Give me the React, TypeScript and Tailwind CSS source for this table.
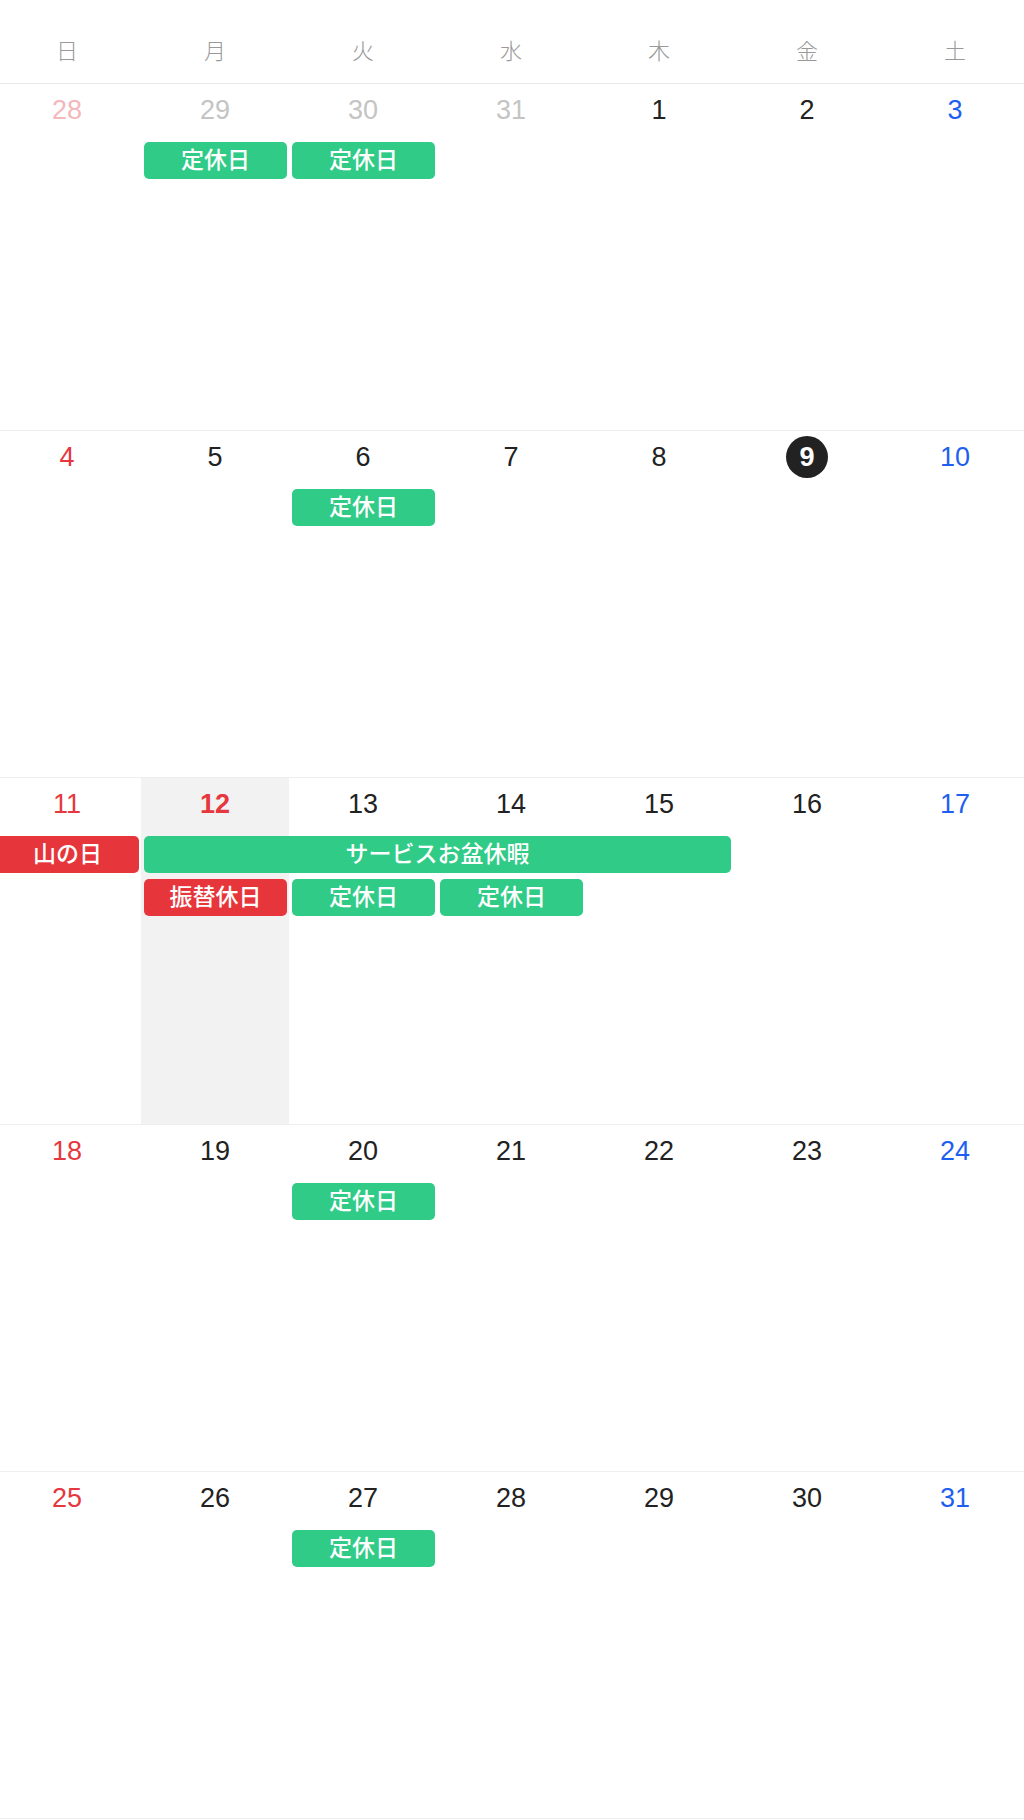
import React from 'react';

type Tone = 'green' | 'red';
type CalEvent = { label: string; start: number; span: number; lane: number; tone: Tone };
type Day = { n: number; kind: 'prev' | 'prevSun' | 'sun' | 'sat' | 'day' | 'today' | 'holiday' };

const weekdays = ['日', '月', '火', '水', '木', '金', '土'];

const weeks: { days: Day[]; events: CalEvent[]; shade?: number }[] = [
  {
    days: [
      { n: 28, kind: 'prevSun' },
      { n: 29, kind: 'prev' },
      { n: 30, kind: 'prev' },
      { n: 31, kind: 'prev' },
      { n: 1, kind: 'day' },
      { n: 2, kind: 'day' },
      { n: 3, kind: 'sat' },
    ],
    events: [
      { label: '定休日', start: 2, span: 1, lane: 1, tone: 'green' },
      { label: '定休日', start: 3, span: 1, lane: 1, tone: 'green' },
    ],
  },
  {
    days: [
      { n: 4, kind: 'sun' },
      { n: 5, kind: 'day' },
      { n: 6, kind: 'day' },
      { n: 7, kind: 'day' },
      { n: 8, kind: 'day' },
      { n: 9, kind: 'today' },
      { n: 10, kind: 'sat' },
    ],
    events: [{ label: '定休日', start: 3, span: 1, lane: 1, tone: 'green' }],
  },
  {
    shade: 2,
    days: [
      { n: 11, kind: 'sun' },
      { n: 12, kind: 'holiday' },
      { n: 13, kind: 'day' },
      { n: 14, kind: 'day' },
      { n: 15, kind: 'day' },
      { n: 16, kind: 'day' },
      { n: 17, kind: 'sat' },
    ],
    events: [
      { label: '山の日', start: 1, span: 1, lane: 1, tone: 'red' },
      { label: 'サービスお盆休暇', start: 2, span: 4, lane: 1, tone: 'green' },
      { label: '振替休日', start: 2, span: 1, lane: 2, tone: 'red' },
      { label: '定休日', start: 3, span: 1, lane: 2, tone: 'green' },
      { label: '定休日', start: 4, span: 1, lane: 2, tone: 'green' },
    ],
  },
  {
    days: [
      { n: 18, kind: 'sun' },
      { n: 19, kind: 'day' },
      { n: 20, kind: 'day' },
      { n: 21, kind: 'day' },
      { n: 22, kind: 'day' },
      { n: 23, kind: 'day' },
      { n: 24, kind: 'sat' },
    ],
    events: [{ label: '定休日', start: 3, span: 1, lane: 1, tone: 'green' }],
  },
  {
    days: [
      { n: 25, kind: 'sun' },
      { n: 26, kind: 'day' },
      { n: 27, kind: 'day' },
      { n: 28, kind: 'day' },
      { n: 29, kind: 'day' },
      { n: 30, kind: 'day' },
      { n: 31, kind: 'sat' },
    ],
    events: [{ label: '定休日', start: 3, span: 1, lane: 1, tone: 'green' }],
  },
];

const colStart: Record<number, string> = {
  1: 'col-start-1',
  2: 'col-start-2',
  3: 'col-start-3',
  4: 'col-start-4',
  5: 'col-start-5',
  6: 'col-start-6',
  7: 'col-start-7',
};
const colSpan: Record<number, string> = {
  1: 'col-span-1',
  2: 'col-span-2',
  3: 'col-span-3',
  4: 'col-span-4',
  5: 'col-span-5',
};
const laneRow: Record<number, string> = { 1: 'row-start-2', 2: 'row-start-3' };

const numberColor: Record<Day['kind'], string> = {
  prev: 'text-[#c4c4c4]',
  prevSun: 'text-[#f4b7bb]',
  sun: 'text-[#e5383e]',
  sat: 'text-[#1f5ff0]',
  day: 'text-[#222222]',
  today: 'text-white font-bold',
  holiday: 'text-[#e5383e] font-bold',
};

function DayNumber({ day, col }: { day: Day; col: number }) {
  return (
    <div className={`${colStart[col]} row-start-1 flex justify-center pt-[5px]`}>
      <div
        className={`flex h-[42px] w-[42px] items-center justify-center rounded-full text-[27px] leading-none ${
          numberColor[day.kind]
        } ${day.kind === 'today' ? 'bg-[#222222] text-[24px]' : ''}`}
      >
        {day.n}
      </div>
    </div>
  );
}

function EventPill({ ev }: { ev: CalEvent }) {
  return (
    <div
      className={`${colStart[ev.start]} ${colSpan[ev.span]} ${laneRow[ev.lane]} ml-[3px] mr-[2px] flex h-[37px] items-center justify-center self-start rounded-[5px] text-[23px] font-medium leading-none text-white ${
        ev.tone === 'green' ? 'bg-[#2fcb87]' : 'bg-[#e6363c]'
      }`}
    >
      {ev.label}
    </div>
  );
}

export default function App() {
  return (
    <div
      className="w-[1024px] overflow-hidden bg-white"
      style={{ fontFamily: '"Liberation Sans", "Noto Sans CJK JP", sans-serif' }}
    >
      <div className="-ml-[7px] w-[1036px]">
        {/* weekday header */}
        <div className="grid h-[84px] grid-cols-7 border-b border-[#e8e8e8]">
          {weekdays.map((w) => (
            <div key={w} className="pt-[36px] text-center text-[22px] font-light leading-[32px] text-[#999999]">
              {w}
            </div>
          ))}
        </div>

        {/* weeks */}
        {weeks.map((week, wi) => (
          <div
            key={wi}
            className="grid h-[347px] grid-cols-7 grid-rows-[58px_43px_43px_1fr] border-b border-[#eeeeee]"
          >
            {week.shade && <div className={`${colStart[week.shade]} row-span-full bg-[#f2f2f2]`} />}
            {week.days.map((d, i) => (
              <DayNumber key={i} day={d} col={i + 1} />
            ))}
            {week.events.map((ev, i) => (
              <EventPill key={i} ev={ev} />
            ))}
          </div>
        ))}
      </div>
    </div>
  );
}
